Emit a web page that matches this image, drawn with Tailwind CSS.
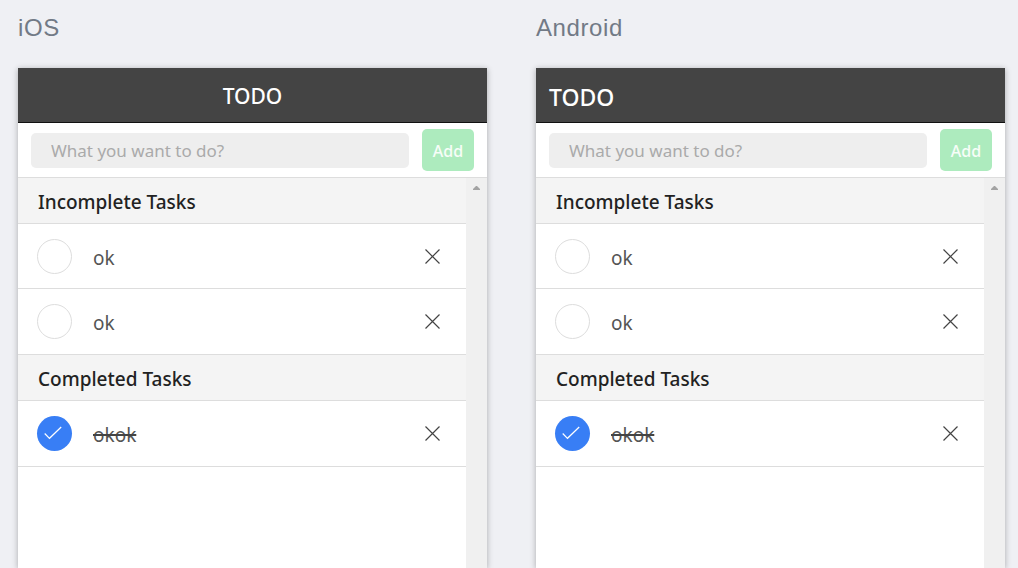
<!DOCTYPE html>
<html lang="en">
<head>
<meta charset="utf-8">
<meta name="viewport" content="width=device-width, initial-scale=1">
<title>TODO</title>
<script src="https://cdn.jsdelivr.net/npm/@tailwindcss/browser@4"></script>
</head>
<body class="bg-[#eff0f4] font-['Noto_Sans','Open_Sans',sans-serif]">
<svg class="hidden" aria-hidden="true">
  <symbol id="close" viewBox="0 0 15 15"><path d="M.5 .5 14.5 14.5M14.5 .5 .5 14.5" fill="none" stroke="currentColor" stroke-width="1.2"/></symbol>
  <symbol id="check" viewBox="0 0 18 14"><path d="M.7 7.5 5.5 12.3 17.2 1" fill="none" stroke="currentColor" stroke-width="1.2"/></symbol>
</svg>
<main class="grid h-screen grid-cols-2 gap-x-[49px] overflow-hidden pl-[18px] pr-[13px]">

  <section class="flex flex-col">
    <h2 class="flex h-[68px] shrink-0 items-start pt-3 font-['Liberation_Sans',sans-serif] text-2xl leading-8 tracking-wide text-[#727a86]">iOS</h2>
    <div class="flex flex-1 flex-col bg-white shadow-[0_1px_6px_rgba(0,0,0,0.3)]">
      <header class="flex h-[55px] items-center justify-center border-b border-[#111] bg-[#444] pt-1 text-white">
        <h1 class="text-[21px] font-medium">TODO</h1>
      </header>
      <form class="flex h-[55px] items-center gap-[13px] border-b border-[#ddd] px-[13px]">
        <input type="text" aria-label="New task" placeholder="What you want to do?" class="h-[35px] min-w-0 flex-1 rounded-[5px] bg-[#eee] px-5 text-[17px] placeholder:text-[#aaa]">
        <button type="button" class="h-[42px] w-[52px] rounded-[5px] bg-[#adebbe] pt-0.5 text-base font-medium text-white/90">Add</button>
      </form>
      <div class="flex flex-1">
        <div class="flex-1">
          <h3 class="flex h-[46px] items-center border-b border-[#ddd] bg-[#f4f4f4] px-5 pt-1 text-[19px] font-medium text-[#222]">Incomplete Tasks</h3>
          <ul>
            <li class="flex h-[65px] items-center border-b border-[#ddd] pl-[19px] pr-[26px] last:h-[66px]">
              <input type="checkbox" id="ios-1" class="size-[35px] appearance-none rounded-full border border-[#ddd]">
              <label for="ios-1" class="flex-1 pl-[21px] pt-1 text-[19px] text-[#555]">ok</label>
              <button type="button" aria-label="Delete" class="text-[#444]"><svg class="size-[15px]"><use href="#close"/></svg></button>
            </li>
            <li class="flex h-[65px] items-center border-b border-[#ddd] pl-[19px] pr-[26px] last:h-[66px]">
              <input type="checkbox" id="ios-2" class="size-[35px] appearance-none rounded-full border border-[#ddd]">
              <label for="ios-2" class="flex-1 pl-[21px] pt-1 text-[19px] text-[#555]">ok</label>
              <button type="button" aria-label="Delete" class="text-[#444]"><svg class="size-[15px]"><use href="#close"/></svg></button>
            </li>
          </ul>
          <h3 class="flex h-[46px] items-center border-b border-[#ddd] bg-[#f4f4f4] px-5 pt-1 text-[19px] font-medium text-[#222]">Completed Tasks</h3>
          <ul>
            <li class="flex h-[65px] items-center border-b border-[#ddd] pl-[19px] pr-[26px] last:h-[66px]">
              <span class="grid">
                <input type="checkbox" id="ios-3" checked class="col-start-1 row-start-1 size-[35px] appearance-none rounded-full bg-[#387ef5]">
                <svg class="pointer-events-none col-start-1 row-start-1 ml-[7px] mt-2.5 h-3.5 w-[18px] text-white"><use href="#check"/></svg>
              </span>
              <label for="ios-3" class="flex-1 pl-[21px] pt-1 text-[19px] text-[#555] line-through decoration-[#444] decoration-2">okok</label>
              <button type="button" aria-label="Delete" class="text-[#444]"><svg class="size-[15px]"><use href="#close"/></svg></button>
            </li>
          </ul>
        </div>
        <div class="flex w-[21px] justify-center bg-[#f0f0f0] pt-2" aria-hidden="true">
          <svg class="h-1 w-[7px] text-[#a3a3a3]" viewBox="0 0 7 4"><path d="M0 4V3L3 0H4L7 3V4Z" fill="currentColor"/></svg>
        </div>
      </div>
    </div>
  </section>

  <section class="flex flex-col">
    <h2 class="flex h-[68px] shrink-0 items-start pt-3 font-['Liberation_Sans',sans-serif] text-2xl leading-8 tracking-wide text-[#727a86]">Android</h2>
    <div class="flex flex-1 flex-col bg-white shadow-[0_1px_6px_rgba(0,0,0,0.3)]">
      <header class="flex h-[55px] items-center border-b border-[#111] bg-[#444] px-[13px] pt-1 text-white">
        <h1 class="text-[23px] font-medium">TODO</h1>
      </header>
      <form class="flex h-[55px] items-center gap-[13px] border-b border-[#ddd] px-[13px]">
        <input type="text" aria-label="New task" placeholder="What you want to do?" class="h-[35px] min-w-0 flex-1 rounded-[5px] bg-[#eee] px-5 text-[17px] placeholder:text-[#aaa]">
        <button type="button" class="h-[42px] w-[52px] rounded-[5px] bg-[#adebbe] pt-0.5 text-base font-medium text-white/90">Add</button>
      </form>
      <div class="flex flex-1">
        <div class="flex-1">
          <h3 class="flex h-[46px] items-center border-b border-[#ddd] bg-[#f4f4f4] px-5 pt-1 text-[19px] font-medium text-[#222]">Incomplete Tasks</h3>
          <ul>
            <li class="flex h-[65px] items-center border-b border-[#ddd] pl-[19px] pr-[26px] last:h-[66px]">
              <input type="checkbox" id="android-1" class="size-[35px] appearance-none rounded-full border border-[#ddd]">
              <label for="android-1" class="flex-1 pl-[21px] pt-1 text-[19px] text-[#555]">ok</label>
              <button type="button" aria-label="Delete" class="text-[#444]"><svg class="size-[15px]"><use href="#close"/></svg></button>
            </li>
            <li class="flex h-[65px] items-center border-b border-[#ddd] pl-[19px] pr-[26px] last:h-[66px]">
              <input type="checkbox" id="android-2" class="size-[35px] appearance-none rounded-full border border-[#ddd]">
              <label for="android-2" class="flex-1 pl-[21px] pt-1 text-[19px] text-[#555]">ok</label>
              <button type="button" aria-label="Delete" class="text-[#444]"><svg class="size-[15px]"><use href="#close"/></svg></button>
            </li>
          </ul>
          <h3 class="flex h-[46px] items-center border-b border-[#ddd] bg-[#f4f4f4] px-5 pt-1 text-[19px] font-medium text-[#222]">Completed Tasks</h3>
          <ul>
            <li class="flex h-[65px] items-center border-b border-[#ddd] pl-[19px] pr-[26px] last:h-[66px]">
              <span class="grid">
                <input type="checkbox" id="android-3" checked class="col-start-1 row-start-1 size-[35px] appearance-none rounded-full bg-[#387ef5]">
                <svg class="pointer-events-none col-start-1 row-start-1 ml-[7px] mt-2.5 h-3.5 w-[18px] text-white"><use href="#check"/></svg>
              </span>
              <label for="android-3" class="flex-1 pl-[21px] pt-1 text-[19px] text-[#555] line-through decoration-[#444] decoration-2">okok</label>
              <button type="button" aria-label="Delete" class="text-[#444]"><svg class="size-[15px]"><use href="#close"/></svg></button>
            </li>
          </ul>
        </div>
        <div class="flex w-[21px] justify-center bg-[#f0f0f0] pt-2" aria-hidden="true">
          <svg class="h-1 w-[7px] text-[#a3a3a3]" viewBox="0 0 7 4"><path d="M0 4V3L3 0H4L7 3V4Z" fill="currentColor"/></svg>
        </div>
      </div>
    </div>
  </section>

</main>
</body>
</html>
